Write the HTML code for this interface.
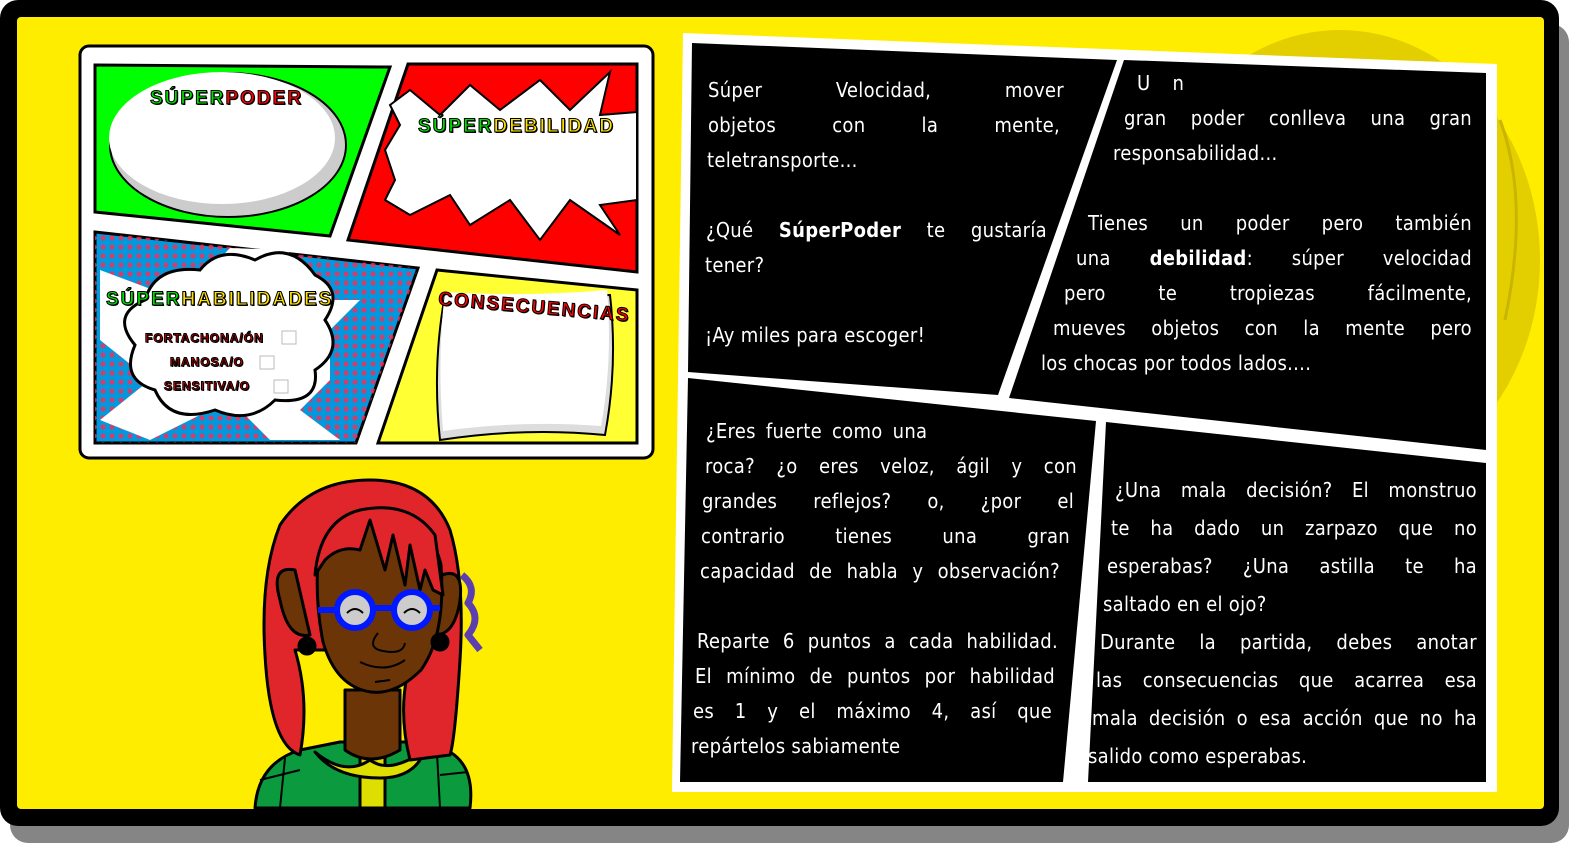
<!DOCTYPE html>
<html><head><meta charset="utf-8"><style>
*{margin:0;padding:0;box-sizing:border-box}
body{width:1569px;height:843px;background:#fff;position:relative;overflow:hidden;font-family:"DejaVu Sans Condensed","DejaVu Sans","Liberation Sans",sans-serif;font-stretch:condensed}
.sh{position:absolute;left:10px;top:24px;width:1559px;height:819px;background:#858585;border-radius:18px}
.fr{position:absolute;left:0;top:0;width:1559px;height:826px;background:#000;border-radius:18px}
.ye{position:absolute;left:17px;top:17px;width:1527px;height:792px;background:#ffed00;border-radius:4px;overflow:hidden}
svg{position:absolute;left:0;top:0}
.t{position:absolute;color:#fff;font-size:20px;line-height:24px;white-space:nowrap;letter-spacing:0.3px}
.j{text-align:justify;text-align-last:justify;white-space:normal}
b{font-weight:bold}
.lb{position:absolute;font-family:"Liberation Sans Narrow","Liberation Sans",sans-serif;font-weight:bold;letter-spacing:2px;-webkit-text-stroke:1px #000;text-shadow:1px 1px 0 #000}
</style></head><body>
<div class="sh"></div><div class="fr"></div><div class="ye"></div>
<svg width="1569" height="843" viewBox="0 0 1569 843">
<defs><clipPath id="yc"><rect x="17" y="17" width="1527" height="792"/></clipPath>
<pattern id="dots" width="9" height="9" patternUnits="userSpaceOnUse"><circle cx="4" cy="4" r="2.6" fill="#ff2a55"/></pattern></defs>
<g clip-path="url(#yc)">
<ellipse cx="1340" cy="260" rx="200" ry="230" fill="#e3cf00"/>
<path d="M1500,120 q30,80 5,200 M1490,160 q-30,40 -20,90" fill="none" stroke="#c9b400" stroke-width="3"/>
</g>
<!-- right comic -->
<polygon points="683,33 1497,64 1497,792 672,792" fill="#fff"/>
<polygon points="692,43 1117,60 998,395 688,372" fill="#000"/>
<polygon points="1124,60 1486,73 1486,450 1009,398" fill="#000"/>
<polygon points="688,378 1096,421 1063,782 680,782" fill="#000"/>
<polygon points="1106,422 1486,463 1486,782 1088,782" fill="#000"/>
<!-- left comic -->
<rect x="80" y="46" width="573" height="412" rx="9" fill="#fff" stroke="#000" stroke-width="3"/>
<polygon points="95,65 390,67 330,236 95,212" fill="#00ff00" stroke="#000" stroke-width="3"/>
<polygon points="408,64 637,64 637,272 348,240" fill="#ff0000" stroke="#000" stroke-width="3"/>
<polygon points="95,232 418,268 356,443 95,443" fill="#0099dd" stroke="#000" stroke-width="3"/>
<polygon points="95,232 418,268 356,443 95,443" fill="url(#dots)" opacity="0.8"/>
<polygon points="437,270 637,290 637,443 378,443" fill="#ffff33" stroke="#000" stroke-width="3"/>
<ellipse cx="228" cy="145" rx="118" ry="72" fill="#ccc" stroke="#000" stroke-width="2"/>
<ellipse cx="222" cy="138" rx="113" ry="66" fill="#fff"/>
<polygon points="410,90 440,115 470,85 500,110 540,80 570,110 610,72 600,115 637,112 637,200 600,205 620,235 570,200 540,240 510,200 470,225 450,195 410,215 385,200 395,180 385,150 400,125 390,105" fill="#fff" stroke="#000" stroke-width="2"/>
<polygon points="100,270 180,300 230,248 290,250 260,300 360,300 330,330 330,380 300,410 340,440 270,440 230,400 150,440 100,420 150,380 100,340" fill="#fff"/>
<path d="M145,300 q10,-35 55,-30 q20,-25 55,-10 q35,-20 60,15 q30,15 10,45 q20,30 -10,50 q5,35 -40,30 q-25,25 -60,10 q-45,15 -60,-20 q-35,-10 -20,-45 q-25,-30 10,-45z" fill="#fff" stroke="#000" stroke-width="3"/>
<path d="M445,295 q80,5 165,0 q8,70 -5,140 q-80,-8 -165,5 q-8,-75 5,-145z" fill="#ddd" stroke="#000" stroke-width="2"/>
<path d="M445,292 q80,5 162,-2 q6,70 -6,136 q-80,-6 -158,5 q-6,-75 2,-139z" fill="#fff"/>
<rect x="282" y="331" width="14" height="13" fill="#fff" stroke="#bbb"/>
<rect x="260" y="356" width="14" height="13" fill="#fff" stroke="#bbb"/>
<rect x="274" y="380" width="14" height="13" fill="#fff" stroke="#bbb"/>
<!-- girl -->
<g stroke="#000" stroke-width="3" stroke-linejoin="round">
<path d="M255,808 q3,-45 45,-58 l40,-8 l80,0 l30,10 q25,15 20,56z" fill="#0b9a3e"/>
<path d="M280,808 l5,-50 M300,770 l-40,10 M440,808 l-3,-55 M440,775 l28,-3" stroke-width="2" fill="none" stroke="#000"/>
<path d="M360,808 l0,-52 l25,0 l0,52z" fill="#dede00"/>
<path d="M315,752 q30,25 55,8 q20,15 55,-10 q-10,28 -45,28 q-45,0 -65,-26z" fill="#dede00"/>
<path d="M345,690 l0,60 q25,18 55,0 l0,-60z" fill="#6b3508"/>
<path d="M300,755 q-30,-10 -35,-100 q-5,-80 15,-130 q30,-45 90,-45 q60,0 80,50 q15,50 10,130 q-5,80 -10,95 l-40,5 q-15,-60 5,-110 l-120,0 q15,50 5,105z" fill="#e0262b"/>
<path d="M295,570 q-25,-5 -15,30 q8,40 30,35 z" fill="#6b3508"/>
<path d="M442,575 q22,-8 18,25 q-5,35 -25,35 z" fill="#6b3508"/>
<path d="M318,560 q5,-30 60,-45 q55,10 63,50 q5,70 -20,105 q-25,25 -50,22 q-35,-5 -48,-50 q-8,-40 -5,-82z" fill="#6b3508"/>
<path d="M315,575 q5,-55 45,-65 q50,-10 75,25 l8,60 l-10,-5 l-8,-20 l-5,20 l-10,-45 l-5,40 l-12,-50 l-8,35 l-15,-50 l-10,30 q-20,-5 -35,10z" fill="#e0262b"/>
<circle cx="355" cy="610" r="18" fill="#ccc" stroke="#0018ff" stroke-width="6"/>
<circle cx="412" cy="610" r="18" fill="#ccc" stroke="#0018ff" stroke-width="6"/>
<path d="M318,610 l17,0 M373,608 l21,0 M430,608 l10,0" stroke="#0018ff" stroke-width="6"/>
<path d="M347,613 q8,-8 16,0 M404,613 q8,-8 16,0" fill="none" stroke-width="2"/>
<path d="M378,633 q-12,15 5,18 q20,4 22,-8" fill="none" stroke-width="2"/>
<path d="M360,662 q25,12 45,-2 M375,682 l15,-2" fill="none" stroke-width="2"/>
<circle cx="307" cy="646" r="8" fill="#000"/><circle cx="440" cy="642" r="8" fill="#000"/>
<path d="M462,575 q15,12 6,28 q14,15 0,32 l12,15" fill="none" stroke="#5b3fb0" stroke-width="7"/>
</g>
</svg>
<div class="lb" style="left:150px;top:88px;font-size:19px;color:#00e000">SÚPER<span style="color:#f00">PODER</span></div>
<div class="lb" style="left:418px;top:116px;font-size:19px;color:#00e000">SÚPER<span style="color:#ffe000">DEBILIDAD</span></div>
<div class="lb" style="left:106px;top:289px;font-size:19px;color:#00e000">SÚPER<span style="color:#ffe000">HABILIDADES</span></div>
<div class="lb" style="left:438px;top:297px;font-size:19px;color:#f00;transform:rotate(5deg)">CONSECUENCIAS</div>
<div class="lb" style="left:145px;top:331px;font-size:12px;color:#f00;letter-spacing:1px">FORTACHONA/ÓN</div>
<div class="lb" style="left:170px;top:355px;font-size:12px;color:#f00;letter-spacing:1px">MANOSA/O</div>
<div class="lb" style="left:164px;top:379px;font-size:12px;color:#f00;letter-spacing:1px">SENSITIVA/O</div>

<div class="t j" style="left:708px;top:78px;width:356px">Súper Velocidad, mover</div>
<div class="t j" style="left:708px;top:113px;width:352px">objetos con la mente,</div>
<div class="t" style="left:707px;top:148px">teletransporte...</div>
<div class="t j" style="left:706px;top:218px;width:341px">¿Qué <b>SúperPoder</b> te gustaría</div>
<div class="t" style="left:705px;top:253px">tener?</div>
<div class="t" style="left:705px;top:323px">¡Ay miles para escoger!</div>

<div class="t" style="left:1137px;top:71px;word-spacing:16px">U n</div>
<div class="t j" style="left:1124px;top:106px;width:348px">gran poder conlleva una gran</div>
<div class="t" style="left:1113px;top:141px">responsabilidad...</div>
<div class="t j" style="left:1088px;top:211px;width:384px">Tienes un poder pero también</div>
<div class="t j" style="left:1076px;top:246px;width:396px">una <b>debilidad</b>: súper velocidad</div>
<div class="t j" style="left:1064px;top:281px;width:408px">pero te tropiezas fácilmente,</div>
<div class="t j" style="left:1053px;top:316px;width:419px">mueves objetos con la mente pero</div>
<div class="t" style="left:1041px;top:351px">los chocas por todos lados....</div>

<div class="t" style="left:706px;top:419px;word-spacing:4px">¿Eres fuerte como una</div>
<div class="t j" style="left:705px;top:454px;width:372px">roca? ¿o eres veloz, ágil y con</div>
<div class="t j" style="left:702px;top:489px;width:372px">grandes reflejos? o, ¿por el</div>
<div class="t j" style="left:701px;top:524px;width:369px">contrario tienes una gran</div>
<div class="t j" style="left:700px;top:559px;width:360px">capacidad de habla y observación?</div>
<div class="t j" style="left:697px;top:629px;width:361px">Reparte 6 puntos a cada habilidad.</div>
<div class="t j" style="left:695px;top:664px;width:360px">El mínimo de puntos por habilidad</div>
<div class="t j" style="left:693px;top:699px;width:359px">es 1 y el máximo 4, así que</div>
<div class="t" style="left:691px;top:734px">repártelos sabiamente</div>

<div class="t j" style="left:1115px;top:478px;width:362px">¿Una mala decisión? El monstruo</div>
<div class="t j" style="left:1111px;top:516px;width:366px">te ha dado un zarpazo que no</div>
<div class="t j" style="left:1107px;top:554px;width:370px">esperabas? ¿Una astilla te ha</div>
<div class="t" style="left:1103px;top:592px">saltado en el ojo?</div>
<div class="t j" style="left:1100px;top:630px;width:377px">Durante la partida, debes anotar</div>
<div class="t j" style="left:1096px;top:668px;width:381px">las consecuencias que acarrea esa</div>
<div class="t j" style="left:1092px;top:706px;width:385px">mala decisión o esa acción que no ha</div>
<div class="t" style="left:1088px;top:744px">salido como esperabas.</div>
</body></html>
